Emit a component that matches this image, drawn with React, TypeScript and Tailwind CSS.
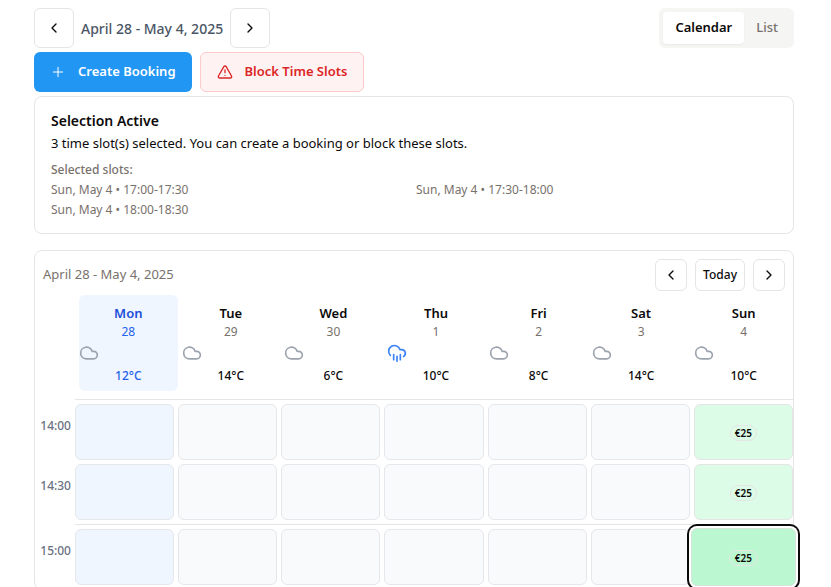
import { ChevronLeft, ChevronRight, Cloud, CloudRain, Plus, TriangleAlert } from 'lucide-react';

const days = [
  { name: 'Mon', date: 28, temp: 12, rain: false, today: true },
  { name: 'Tue', date: 29, temp: 14, rain: false, today: false },
  { name: 'Wed', date: 30, temp: 6, rain: false, today: false },
  { name: 'Thu', date: 1, temp: 10, rain: true, today: false },
  { name: 'Fri', date: 2, temp: 8, rain: false, today: false },
  { name: 'Sat', date: 3, temp: 14, rain: false, today: false },
  { name: 'Sun', date: 4, temp: 10, rain: false, today: false },
];

const hours = [['14:00', '14:30'], ['15:00']];

const selectedSlots = ['17:00-17:30', '17:30-18:00', '18:00-18:30'];

function Toolbar() {
  const square = 'flex size-10 items-center justify-center rounded-md border border-[#e5e5e5] bg-white';
  return (
    <div className="flex items-center justify-between">
      <div className="flex items-center gap-[7px]">
        <button className={square} aria-label="Previous week">
          <ChevronLeft size={16} />
        </button>
        <span className="text-[14px] font-medium text-gray-600">April 28 - May 4, 2025</span>
        <button className={square} aria-label="Next week">
          <ChevronRight size={16} />
        </button>
      </div>
      <div className="flex h-10 items-center rounded-md bg-[#f5f5f4] p-1 text-[13px] font-semibold">
        <button className="h-8 rounded-[4px] bg-white px-3 text-[#0c0a09] shadow-xs">Calendar</button>
        <button className="h-8 px-3 font-medium text-[#78716c]">List</button>
      </div>
    </div>
  );
}

function Actions() {
  return (
    <div className="mt-1 flex gap-2 text-[13px] font-semibold">
      <button className="flex h-10 items-center gap-3 rounded-md bg-[#2196f3] px-4 text-white">
        <Plus size={16} strokeWidth={1.5} />
        Create Booking
      </button>
      <button className="flex h-10 items-center gap-3 rounded-md border border-[#fecaca] bg-[#fef2f2] px-4 text-[#dc2626]">
        <TriangleAlert size={16} />
        Block Time Slots
      </button>
    </div>
  );
}

function SelectionCard() {
  return (
    <section className="mt-1 rounded-lg border border-[#e5e5e5] px-4 pt-4 pb-[11px]">
      <h2 className="text-[14px] leading-4 font-semibold">Selection Active</h2>
      <p className="mt-1 text-[13px] leading-5">
        3 time slot(s) selected. You can create a booking or block these slots.
      </p>
      <p className="mt-[9px] text-[12px] leading-4 font-medium text-[#78716c]">Selected slots:</p>
      <ul className="mt-1 mb-1 grid grid-cols-2 gap-1 text-[12px] leading-4 text-[#78716c]">
        {selectedSlots.map((slot) => (
          <li key={slot}>Sun, May 4 • {slot}</li>
        ))}
      </ul>
    </section>
  );
}

function CalendarHeader() {
  const small = 'flex h-8 items-center justify-center rounded-md border border-[#e5e5e5] bg-white';
  return (
    <div className="flex items-center justify-between p-2 pb-1">
      <span className="text-[13px] text-[#78716c]">April 28 - May 4, 2025</span>
      <div className="flex gap-2 text-[12px] font-medium">
        <button className={small + ' w-8'} aria-label="Previous">
          <ChevronLeft size={16} />
        </button>
        <button className={small + ' px-[7px]'}>Today</button>
        <button className={small + ' w-8'} aria-label="Next">
          <ChevronRight size={16} />
        </button>
      </div>
    </div>
  );
}

function DayHeadings() {
  return (
    <div className="mb-2 grid grid-cols-[40px_repeat(7,minmax(0,1fr))] gap-x-1">
      <div />
      {days.map((day) => (
        <div
          key={day.name}
          className={'flex h-24 flex-col rounded-md pt-2 text-center ' + (day.today ? 'bg-[#eff6ff] text-[#2563eb]' : '')}
        >
          <div className={'text-[13px] leading-5 font-semibold ' + (day.today ? 'text-[#1d4ed8]' : '')}>{day.name}</div>
          <div className={'text-[12px] leading-[18px] ' + (day.today ? '' : 'text-[#78716c]')}>{day.date}</div>
          <div className="mt-[2px]">
            {day.rain ? (
              <CloudRain size={20} className="text-[#3b82f6]" />
            ) : (
              <Cloud size={20} className="text-[#9ca3af]" />
            )}
          </div>
          <div className="mt-1 text-[12px] leading-[18px] font-medium">{day.temp}°C</div>
        </div>
      ))}
    </div>
  );
}

function Price({ large }: { large?: boolean }) {
  return (
    <span
      className={
        'rounded-full border border-[#e5e5e5] text-[10px] leading-[14px] font-semibold text-[#0c0a09] ' +
        (large ? 'px-[5px]' : 'px-1')
      }
    >
      €25
    </span>
  );
}

function Slot({ day, time }: { day: (typeof days)[number]; time: string }) {
  const label = day.name + ' ' + time;
  if (day.name !== 'Sun') {
    return (
      <button
        aria-label={label}
        className={'h-14 rounded-md border border-[#e5e7eb] ' + (day.today ? 'bg-[#eff6ff]' : 'bg-[#f9fafb]')}
      />
    );
  }
  if (time === '15:00') {
    return (
      <div className="relative h-14">
        <button
          aria-label={label}
          className="absolute -inset-x-[3px] -inset-y-px flex items-center justify-center rounded-md border border-[#d6e5da] bg-[#bbf7d0] pt-[2px] ring-2 ring-[#0c0a09] ring-offset-2"
        >
          <Price large />
        </button>
      </div>
    );
  }
  return (
    <button
      aria-label={label}
      className="flex h-14 items-center justify-center rounded-md border border-[#e5e5e5] bg-[#dcfce7] pt-[2px]"
    >
      <Price />
    </button>
  );
}

function TimeGrid() {
  return (
    <div>
      {hours.map((group) => (
        <div key={group[0]} className="flex">
          <div className="w-10 shrink-0 pt-[5px]">
            {group.map((time) => (
              <div key={time} className="mb-1 h-14 pt-[14px] pr-1 text-right text-[12px] leading-4 font-medium text-gray-500">
                {time}
              </div>
            ))}
          </div>
          <div className="min-w-0 flex-1 border-t border-[#e5e5e5] pt-1">
            {group.map((time) => (
              <div key={time} className="mb-1 grid grid-cols-7 gap-1">
                {days.map((day) => (
                  <Slot key={day.name} day={day} time={time} />
                ))}
              </div>
            ))}
          </div>
        </div>
      ))}
    </div>
  );
}

export default function App() {
  return (
    <main className="h-screen overflow-hidden bg-white pt-2 pr-[37px] pl-[34px] font-['Noto_Sans','Open_Sans',sans-serif] text-[#0c0a09]">
      <Toolbar />
      <Actions />
      <SelectionCard />
      <section className="mt-4 rounded-lg border border-[#e5e5e5]">
        <CalendarHeader />
        <DayHeadings />
        <TimeGrid />
      </section>
    </main>
  );
}
